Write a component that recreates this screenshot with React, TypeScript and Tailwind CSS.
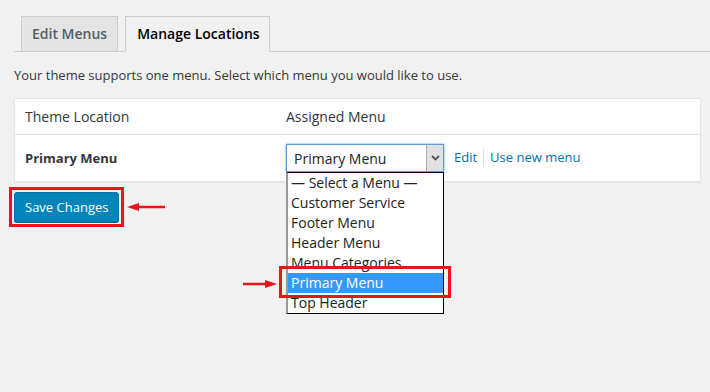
import React from 'react';

const menuOptions = [
  '— Select a Menu —',
  'Customer Service',
  'Footer Menu',
  'Header Menu',
  'Menu Categories',
  'Primary Menu',
  'Top Header',
];

const ArrowLeft = () => (
  <svg width="40" height="10" viewBox="0 0 40 10">
    <line x1="10" y1="5" x2="38" y2="5" stroke="#e8151b" strokeWidth="2.5" />
    <polygon points="0,5 12,1 12,9" fill="#e8151b" />
  </svg>
);

const ArrowRight = () => (
  <svg width="34" height="10" viewBox="0 0 34 10">
    <line x1="0" y1="5" x2="24" y2="5" stroke="#e8151b" strokeWidth="2.5" />
    <polygon points="34,5 22,1 22,9" fill="#e8151b" />
  </svg>
);

export default function App() {
  return (
    <div className="relative w-[710px] h-[392px] overflow-hidden bg-[#f1f1f1] pl-[14px] pr-[9px] pt-[16px] font-['Open_Sans',sans-serif] text-[#32373c]">
      {/* Tabs */}
      <div className="flex gap-[7px] border-b border-[#ccc] pl-[7px] -mr-[9px]">
        <div className="-mb-px h-[36px] border border-[#ccc] bg-[#e4e4e4] px-[10px] pt-[7px] text-[14px] font-semibold leading-[20px] text-[#555d66]">
          Edit Menus
        </div>
        <div className="-mb-px h-[36px] border border-[#ccc] border-b-[#f1f1f1] bg-[#f1f1f1] pl-[11px] pr-[9px] pt-[7px] text-[14px] font-semibold leading-[20px] text-black">
          Manage Locations
        </div>
      </div>

      <p className="mt-[13px] text-[13px] leading-[20px]">
        Your theme supports one menu. Select which menu you would like to use.
      </p>

      {/* Locations table */}
      <div className="mt-[13px] border border-[#e5e5e5] bg-white shadow-[0_1px_1px_rgba(0,0,0,0.04)]">
        <div className="flex h-[36px] items-center border-b border-[#e1e1e1] text-[14px]">
          <div className="w-[271px] pl-[10px]">Theme Location</div>
          <div>Assigned Menu</div>
        </div>
        <div className="flex h-[46px] items-center text-[13px]">
          <div className="w-[271px] pl-[10px] pt-px font-bold">Primary Menu</div>
          <div className="flex items-center">
            <div className="relative">
              <div className="flex h-[28px] w-[158px] items-center justify-between border border-[#5b9dd9] bg-white pl-[7px] text-[14px] text-[#222] shadow-[0_0_2px_rgba(30,140,190,0.8)]">
                <span>Primary Menu</span>
                <div className="flex h-[26px] w-[17px] items-center justify-center border-l border-[#aaa] bg-[#e1e1e1]">
                  <svg width="9" height="6" viewBox="0 0 9 6">
                    <path d="M1 1 L4.5 4.5 L8 1" fill="none" stroke="#555" strokeWidth="1.8" />
                  </svg>
                </div>
              </div>
              {/* open dropdown */}
              <div className="absolute left-0 top-[28px] z-10 w-[158px] border border-black border-l-2 border-l-[#999] bg-white text-[14px] leading-[20px] text-[#222]">
                {menuOptions.map((opt, i) => (
                  <div
                    key={i}
                    className={i === 5 ? 'h-[20px] bg-[#3399ff] pl-[3px] text-white' : 'h-[20px] pl-[3px]'}
                  >
                    {opt}
                  </div>
                ))}
              </div>
            </div>
            <a className="ml-[10px] text-[13px] text-[#0073aa]">Edit</a>
            <span className="mx-[6px] h-[18px] w-px bg-[#ddd]" />
            <a className="text-[13px] text-[#0073aa]">Use new menu</a>
          </div>
        </div>
      </div>

      <div className="mt-[10px]">
        <button className="h-[30px] rounded-[3px] border border-[#0073aa] bg-[#0085ba] px-[10px] text-[13px] leading-[26px] text-white shadow-[0_1px_0_#006799]">
          Save Changes
        </button>
      </div>

      {/* annotations */}
      <div className="pointer-events-none absolute left-[9px] top-[187px] h-[40px] w-[115px] border-[3px] border-[#e8151b]" />
      <div className="pointer-events-none absolute left-[127px] top-[202px]">
        <ArrowLeft />
      </div>
      <div className="pointer-events-none absolute left-[279px] top-[266px] z-20 h-[32px] w-[172px] border-[3px] border-[#e8151b]" />
      <div className="pointer-events-none absolute left-[243px] top-[279px]">
        <ArrowRight />
      </div>
    </div>
  );
}
